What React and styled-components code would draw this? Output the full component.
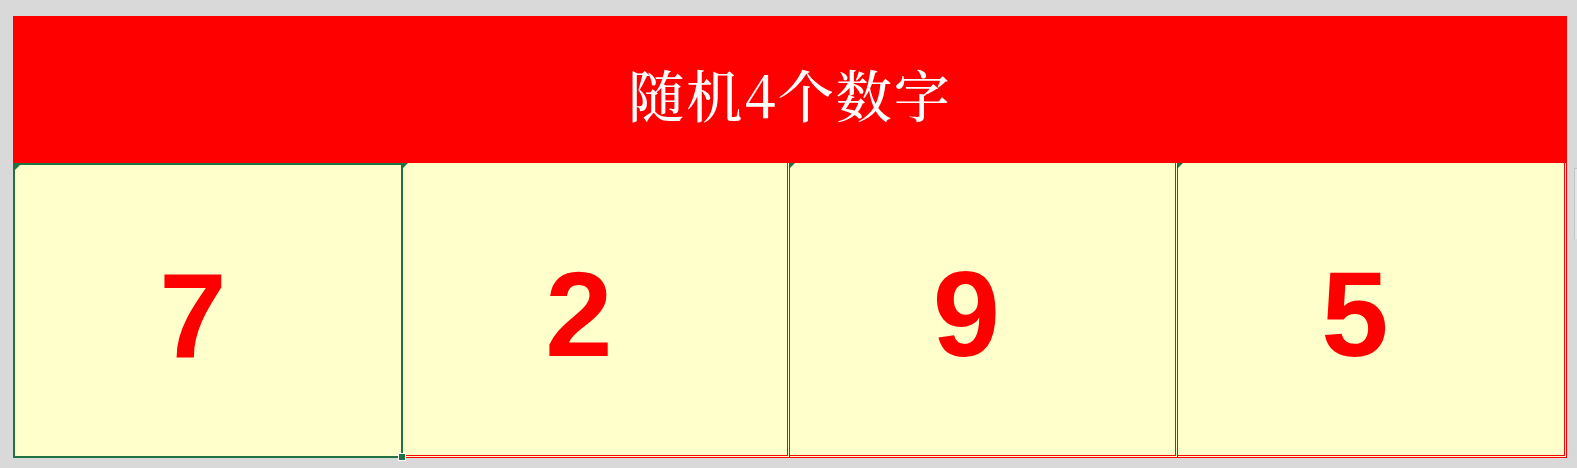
import React from "react";
import styled, { createGlobalStyle } from "styled-components";

const Global = createGlobalStyle`
  html, body { margin: 0; padding: 0; background: #d9d9d9; }
  #root { min-height: 468px; }
`;

const Page = styled.div`
  display: flex;
  align-items: flex-start;
  padding: 16px 0 10px 13px;
  background: #d9d9d9;
  min-height: 468px;
  box-sizing: border-box;
`;

const Sheet = styled.div`
  display: flex;
  flex-direction: column;
  width: 1555px;
`;

const Header = styled.div`
  height: 147px;
  background: #ff0000;
  color: #ffffff;
  display: flex;
  align-items: center;
  justify-content: center;
  padding-top: 6px;
  box-sizing: border-box;
  font-family: "Noto Serif CJK SC", "Liberation Serif", "Noto Sans CJK SC", serif;
  font-weight: 500;
  font-size: 56px;
  letter-spacing: 2px;
`;

const Row = styled.div`
  display: grid;
  grid-template-columns: 390px 387px 388px 389px;
  height: 295px;
`;

const Cell = styled.div`
  position: relative;
  background: #ffffcc;
  box-sizing: border-box;
  display: flex;
  align-items: center;
  justify-content: center;
  padding: 9px 32px 0 0;
  font-family: "Liberation Sans", Arial, sans-serif;
  font-weight: 700;
  font-size: 121px;
  color: #ff0000;
  border-right: 3px double #ff0000;
  border-bottom: 3px double #ff0000;
  ${(p) =>
    p.$selected &&
    `
    border: 2px solid #217346;
    padding-left: 2px;
  `}
`;

const Marker = styled.span`
  position: absolute;
  top: 0;
  left: 0;
  width: 0;
  height: 0;
  border-top: 5px solid #217346;
  border-right: 5px solid transparent;
`;

const Handle = styled.span`
  position: absolute;
  right: -5px;
  bottom: -5px;
  width: 6px;
  height: 6px;
  background: #217346;
  border: 1px solid #ffffff;
  z-index: 2;
`;

const Sliver = styled.div`
  margin-top: 152px;
  margin-left: 7px;
  width: 6px;
  height: 70px;
  border-top: 1px solid #c4c4c4;
  border-left: 1px solid #c4c4c4;
  background: #e6e6e6;
`;

const numbers = [7, 2, 9, 5];

export default function App() {
  return (
    <>
      <Global />
      <Page>
        <Sheet>
          <Header>随机4个数字</Header>
          <Row>
            {numbers.map((n, i) => (
              <Cell key={i} $selected={i === 0}>
                <Marker />
                {n}
                {i === 0 && <Handle />}
              </Cell>
            ))}
          </Row>
        </Sheet>
        <Sliver />
      </Page>
    </>
  );
}
